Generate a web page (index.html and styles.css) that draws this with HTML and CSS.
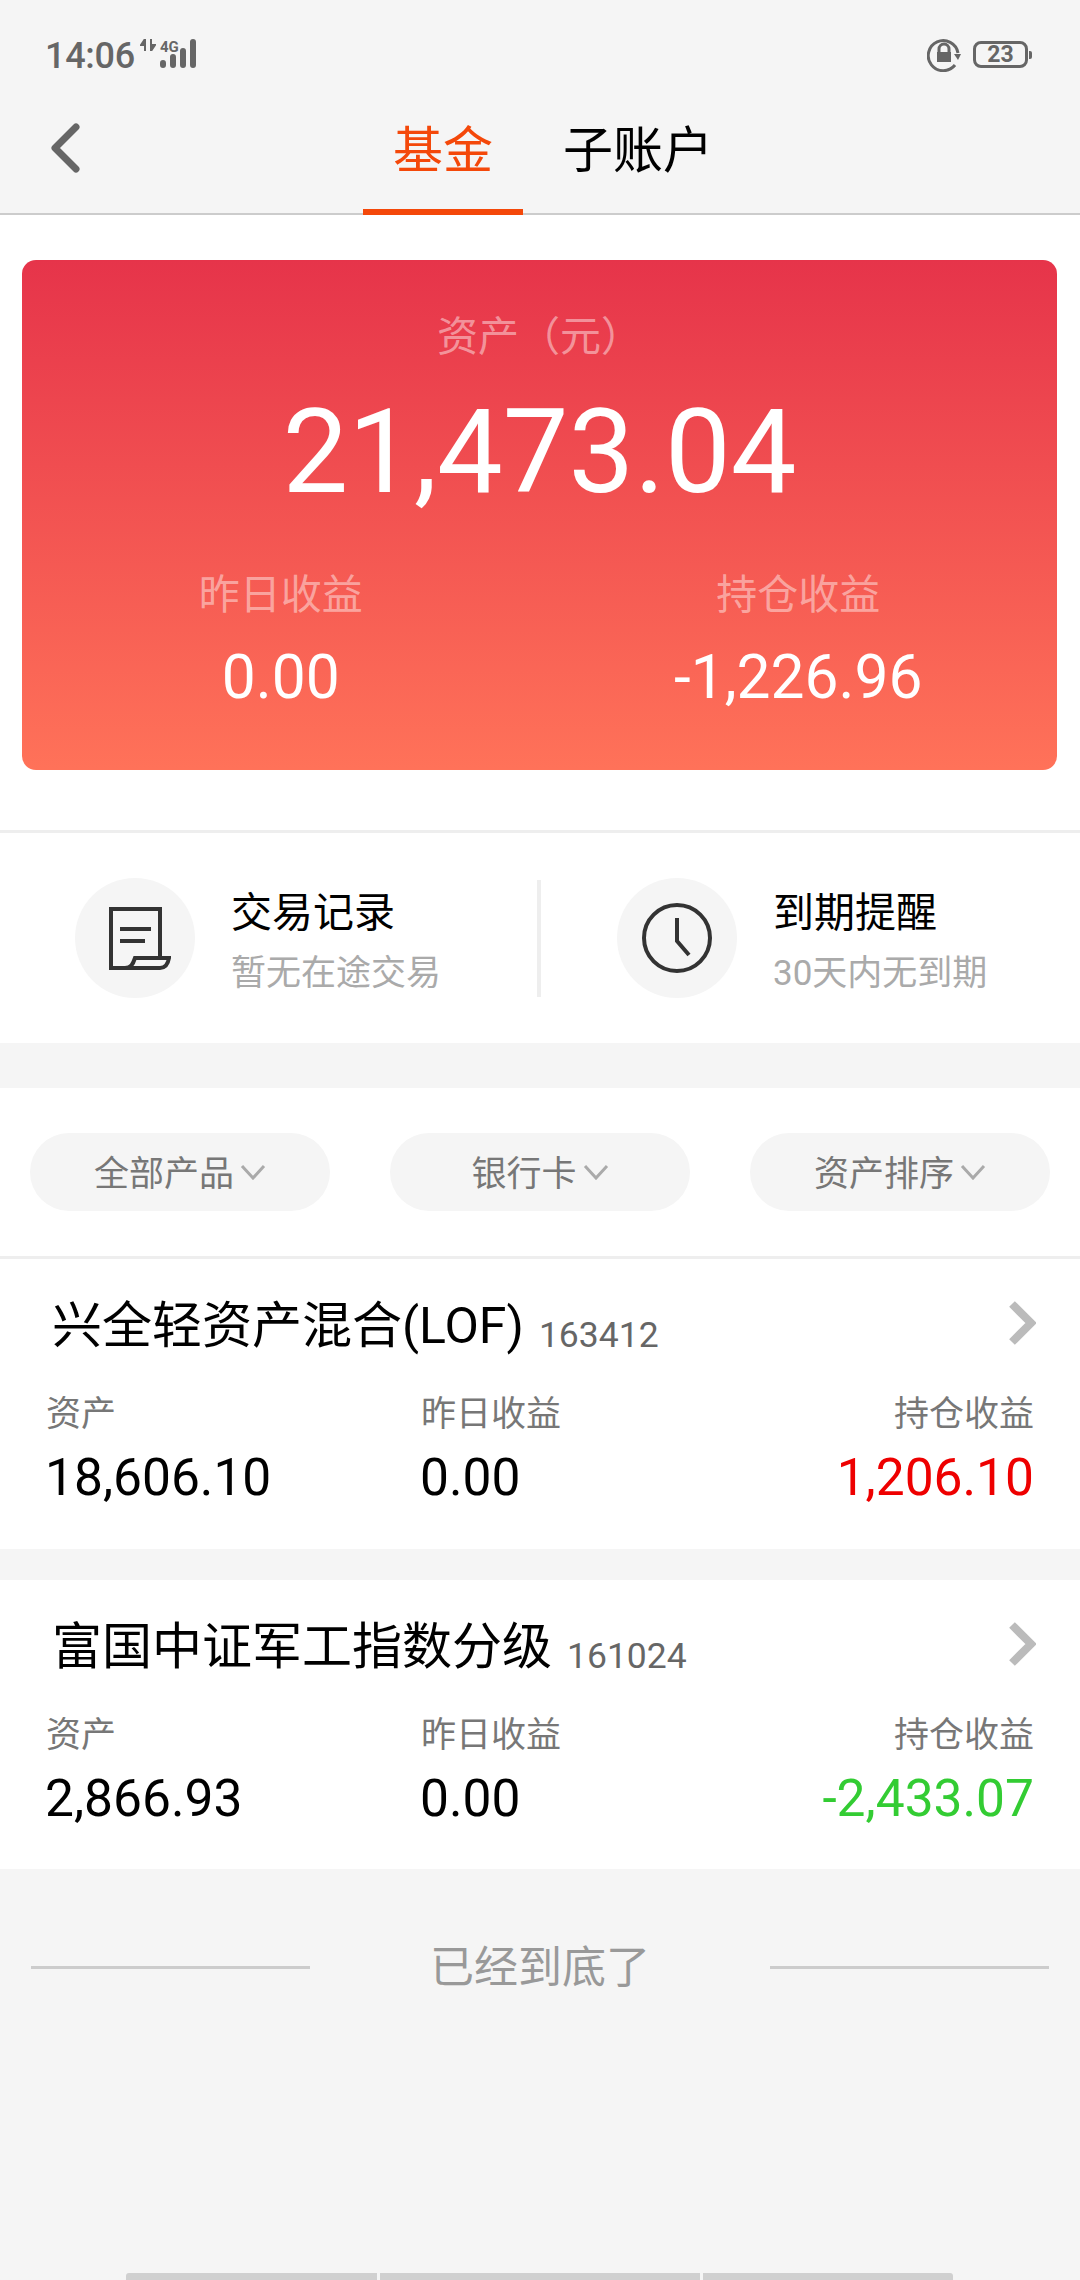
FILE: index.html
```html
<!DOCTYPE html>
<html lang="zh-CN">
<head>
  <meta charset="UTF-8" />
  <title>基金</title>
  <link rel="stylesheet" href="styles.css">
</head>
<body>
  <div class="page">
    <header class="top">
      <div class="status">
        <span class="time">14:06</span>
        <svg class="net-arrows" width="16" height="12" viewBox="0 0 16 12">
          <path d="M5 0v12M5 0L1 6h4M11 12V0M11 12l4-6h-4" fill="#666" stroke="#666" stroke-width="2"/>
        </svg>
        <div class="net">
          <span class="net-type">4G</span>
          <svg class="signal" width="38" height="29" viewBox="0 0 38 29">
            <path d="M3 24v2M13 18v8M23 12v14M33 3v23" fill="none" stroke="#666" stroke-width="6" stroke-linecap="round"/>
          </svg>
        </div>
        <svg class="lock" width="34" height="34" viewBox="0 0 34 34">
          <path d="M28 27A15 15 0 1 1 31 15" fill="none" stroke="#666" stroke-width="3"/>
          <path d="M27 16h7l-3 6z" fill="#666"/>
          <path d="M12 14v-3a5 5 0 0 1 10 0v3" fill="none" stroke="#666" stroke-width="3"/>
          <rect x="10" y="14" width="14" height="10" fill="#666"/>
        </svg>
        <div class="battery"><span>23</span></div>
        <div class="battery-tip"></div>
      </div>
      <nav class="nav">
        <svg class="back" width="30" height="50" viewBox="0 0 30 50">
          <path d="M26 4L5 25l21 21" fill="none" stroke="#666" stroke-width="7" stroke-linecap="round" stroke-linejoin="round"/>
        </svg>
        <div class="tabs">
          <div class="tab active">基金</div>
          <div class="tab">子账户</div>
        </div>
      </nav>
    </header>

    <section class="summary">
      <div class="asset-card">
        <div class="asset-label">资产（元）</div>
        <div class="asset-total">21,473.04</div>
        <div class="asset-cols">
          <div class="asset-col">
            <div class="asset-col-label">昨日收益</div>
            <div class="asset-col-value">0.00</div>
          </div>
          <div class="asset-col">
            <div class="asset-col-label">持仓收益</div>
            <div class="asset-col-value">-1,226.96</div>
          </div>
        </div>
      </div>
    </section>

    <section class="shortcuts">
      <div class="shortcut">
        <div class="shortcut-icon">
          <svg class="receipt" width="64" height="66" viewBox="0 0 64 66">
            <path d="M53 52V4H4v59h16" fill="none" stroke="#333" stroke-width="4"/>
            <path d="M13 24h31M13 36h25" fill="none" stroke="#333" stroke-width="4"/>
            <path d="M18 63c6 0 8-4 10-10h34c-1 6-4 10-9 10z" fill="none" stroke="#333" stroke-width="4"/>
          </svg>
        </div>
        <div class="shortcut-text">
          <div class="shortcut-title">交易记录</div>
          <div class="shortcut-sub">暂无在途交易</div>
        </div>
      </div>
      <div class="shortcut-line"></div>
      <div class="shortcut">
        <div class="shortcut-icon">
          <svg width="70" height="70" viewBox="0 0 70 70">
            <circle cx="35" cy="35" r="33" fill="none" stroke="#333" stroke-width="4"/>
            <path d="M35 15v23l12 14" fill="none" stroke="#333" stroke-width="4"/>
          </svg>
        </div>
        <div class="shortcut-text">
          <div class="shortcut-title">到期提醒</div>
          <div class="shortcut-sub">30天内无到期</div>
        </div>
      </div>
    </section>

    <section class="filters">
      <div class="pill">全部产品<svg class="pill-arrow" width="26" height="16" viewBox="0 0 26 16"><path d="M2 2l11 12L24 2" fill="none" stroke="#aaa" stroke-width="3"/></svg></div>
      <div class="pill">银行卡<svg class="pill-arrow" width="26" height="16" viewBox="0 0 26 16"><path d="M2 2l11 12L24 2" fill="none" stroke="#aaa" stroke-width="3"/></svg></div>
      <div class="pill">资产排序<svg class="pill-arrow" width="26" height="16" viewBox="0 0 26 16"><path d="M2 2l11 12L24 2" fill="none" stroke="#aaa" stroke-width="3"/></svg></div>
    </section>

    <section class="fund first">
      <div class="fund-head">
        <span class="fund-name">兴全轻资产混合(LOF)</span>
        <span class="fund-code">163412</span>
        <svg class="fund-arrow" width="28" height="44" viewBox="0 0 28 44"><path d="M4 3l19 19L4 41" fill="none" stroke="#bbb" stroke-width="8"/></svg>
      </div>
      <div class="fund-row">
        <div class="fund-col">
          <div class="fund-label">资产</div>
          <div class="fund-value">18,606.10</div>
        </div>
        <div class="fund-col">
          <div class="fund-label">昨日收益</div>
          <div class="fund-value">0.00</div>
        </div>
        <div class="fund-col right">
          <div class="fund-label">持仓收益</div>
          <div class="fund-value up">1,206.10</div>
        </div>
      </div>
    </section>

    <section class="fund">
      <div class="fund-head">
        <span class="fund-name">富国中证军工指数分级</span>
        <span class="fund-code">161024</span>
        <svg class="fund-arrow" width="28" height="44" viewBox="0 0 28 44"><path d="M4 3l19 19L4 41" fill="none" stroke="#bbb" stroke-width="8"/></svg>
      </div>
      <div class="fund-row">
        <div class="fund-col">
          <div class="fund-label">资产</div>
          <div class="fund-value">2,866.93</div>
        </div>
        <div class="fund-col">
          <div class="fund-label">昨日收益</div>
          <div class="fund-value">0.00</div>
        </div>
        <div class="fund-col right">
          <div class="fund-label">持仓收益</div>
          <div class="fund-value down">-2,433.07</div>
        </div>
      </div>
    </section>

    <div class="end">
      <div class="end-line"></div>
      <div class="end-text">已经到底了</div>
      <div class="end-line"></div>
    </div>

    <div class="home-bar">
      <div class="home-seg"></div>
      <div class="home-seg mid"></div>
      <div class="home-seg"></div>
    </div>
  </div>
</body>
</html>
```

FILE: styles.css
```css
html, body {
  margin: 0;
  padding: 0;
}
body {
  font-family: Roboto, "Noto Sans CJK SC", sans-serif;
  background: #f5f5f5;
}
.page {
  width: 1080px;
  height: 2280px;
  display: flex;
  flex-direction: column;
  overflow: hidden;
  background: #f5f5f5;
}

/* status bar + tabs */
.top {
  height: 215px;
  flex-shrink: 0;
  box-sizing: border-box;
  border-bottom: 2px solid #ccc;
  background: #f5f5f5;
}
.status {
  display: flex;
  align-items: flex-start;
  height: 72px;
  padding-left: 45px;
  color: #666;
}
.time {
  font-size: 36px;
  font-weight: 500;
  line-height: 36px;
  margin-top: 38px;
  width: 95px;
  letter-spacing: -0.3px;
}
.net-arrows {
  margin-top: 39px;
}
.net {
  position: relative;
  width: 40px;
  height: 40px;
  margin-top: 40px;
  margin-left: 4px;
}
.net-type {
  position: absolute;
  left: 0;
  top: 0;
  font-size: 15px;
  font-weight: 700;
  line-height: 15px;
  color: #666;
}
.signal {
  position: absolute;
  left: 0;
  top: -1px;
}
.lock {
  margin-left: 727px;
  margin-top: 38px;
}
.battery {
  width: 55px;
  height: 27px;
  margin-left: 12px;
  margin-top: 41px;
  box-sizing: border-box;
  border: 3px solid #666;
  border-radius: 8px;
  display: flex;
  align-items: center;
  justify-content: center;
}
.battery span {
  font-size: 23px;
  font-weight: 700;
  line-height: 21px;
  color: #666;
}
.battery-tip {
  width: 3px;
  height: 8px;
  margin-top: 51px;
  margin-left: 1px;
  background: #666;
  border-radius: 0 2px 2px 0;
}
.nav {
  display: flex;
  height: 141px;
  padding-left: 50px;
}
.back {
  margin-top: 51px;
}
.tabs {
  display: flex;
  margin-left: 283px;
  gap: 10px;
  height: 143px;
}
.tab {
  padding: 54px 30px 0;
  height: 143px;
  box-sizing: border-box;
  font-size: 50px;
  line-height: 50px;
  color: #000;
}
.tab.active {
  color: #f4480a;
  border-bottom: 6px solid #f4480a;
}

/* red summary card */
.summary {
  flex-shrink: 0;
  background: #fff;
  padding: 45px 23px 60px 22px;
  border-bottom: 3px solid #eee;
}
.asset-card {
  height: 510px;
  box-sizing: border-box;
  padding-top: 52px;
  border-radius: 14px;
  background: linear-gradient(180deg, #e6344a 0%, #ff7259 100%);
  color: #fff;
  text-align: center;
}
.asset-label {
  font-size: 41px;
  line-height: 50px;
  color: rgba(255, 255, 255, 0.45);
}
.asset-total {
  font-size: 117px;
  line-height: 120px;
  margin-top: 30px;
}
.asset-cols {
  display: flex;
  margin-top: 58px;
}
.asset-col {
  flex: 1;
}
.asset-col-label {
  font-size: 41px;
  line-height: 50px;
  color: rgba(255, 255, 255, 0.45);
}
.asset-col-value {
  font-size: 60.500px;
  line-height: 70px;
  margin-top: 23px;
}

/* records + reminder */
.shortcuts {
  display: flex;
  align-items: center;
  flex-shrink: 0;
  height: 210px;
  background: #fff;
  padding-left: 75px;
}
.shortcut {
  display: flex;
  align-items: center;
  width: 462px;
}
.shortcut + .shortcut-line + .shortcut {
  margin-left: 76px;
}
.shortcut-icon {
  width: 120px;
  height: 120px;
  border-radius: 50%;
  background: #f5f5f5;
  display: flex;
  align-items: center;
  justify-content: center;
  flex-shrink: 0;
}
.receipt {
  margin-left: 8px;
}
.shortcut-text {
  margin-left: 36px;
  padding-top: 8px;
}
.shortcut-title {
  font-size: 41px;
  line-height: 50px;
  color: #000;
}
.shortcut-sub {
  font-size: 35px;
  line-height: 46px;
  margin-top: 13px;
  color: #aaa;
}
.shortcut-line {
  width: 4px;
  height: 117px;
  background: #eee;
}

/* filter pills */
.filters {
  display: flex;
  gap: 60px;
  flex-shrink: 0;
  height: 171px;
  box-sizing: border-box;
  margin-top: 45px;
  padding: 45px 30px 0;
  background: #fff;
  border-bottom: 3px solid #eee;
}
.pill {
  width: 300px;
  height: 78px;
  box-sizing: border-box;
  padding-top: 5px;
  border-radius: 39px;
  background: #f5f5f5;
  color: #777;
  font-size: 35px;
  line-height: 73px;
  display: flex;
  align-items: center;
  justify-content: center;
}
.pill-arrow {
  margin-left: 6px;
  margin-top: -5px;
}

/* fund rows */
.fund {
  height: 289px;
  flex-shrink: 0;
  box-sizing: border-box;
  margin-top: 31px;
  padding: 0 46px;
  background: #fff;
}
.fund.first {
  margin-top: 0;
  height: 290px;
}
.fund-head {
  display: flex;
  align-items: flex-start;
  height: 133px;
  padding-left: 6px;
}
.fund-name {
  font-size: 50px;
  line-height: 50px;
  margin-top: 42px;
  color: #000;
}
.fund-code {
  font-size: 35.500px;
  line-height: 48px;
  margin-top: 52px;
  margin-left: 15px;
  color: #666;
}
.fund-arrow {
  margin-left: auto;
  margin-right: -2px;
  margin-top: 42px;
}
.fund-row {
  display: grid;
  grid-template-columns: 375px 1fr auto;
}
.fund-col.right {
  text-align: right;
}
.fund-label {
  font-size: 35px;
  line-height: 46px;
  color: #777;
}
.fund-value {
  font-size: 51.500px;
  line-height: 52px;
  margin-top: 14px;
  margin-left: -1px;
  color: #000;
}
.fund-value.up {
  color: #ee0000;
}
.fund-value.down {
  color: #33cc33;
}

/* footer */
.end {
  display: flex;
  align-items: center;
  flex-shrink: 0;
  height: 60px;
  margin-top: 68px;
  padding: 0 31px;
}
.end-line {
  width: 279px;
  height: 3px;
  background: #ccc;
}
.end-text {
  flex: 1;
  text-align: center;
  padding-top: 3px;
  font-size: 44px;
  line-height: 57px;
  color: #999;
}
.home-bar {
  display: flex;
  gap: 3px;
  height: 7px;
  margin-top: auto;
  padding-left: 126px;
}
.home-seg {
  width: 251px;
  background: #d0d0d0;
  border-radius: 3px 0 0 0;
}
.home-seg.mid {
  width: 320px;
  border-radius: 0;
}
.home-seg:last-child {
  width: 250px;
  border-radius: 0 3px 0 0;
}
```
